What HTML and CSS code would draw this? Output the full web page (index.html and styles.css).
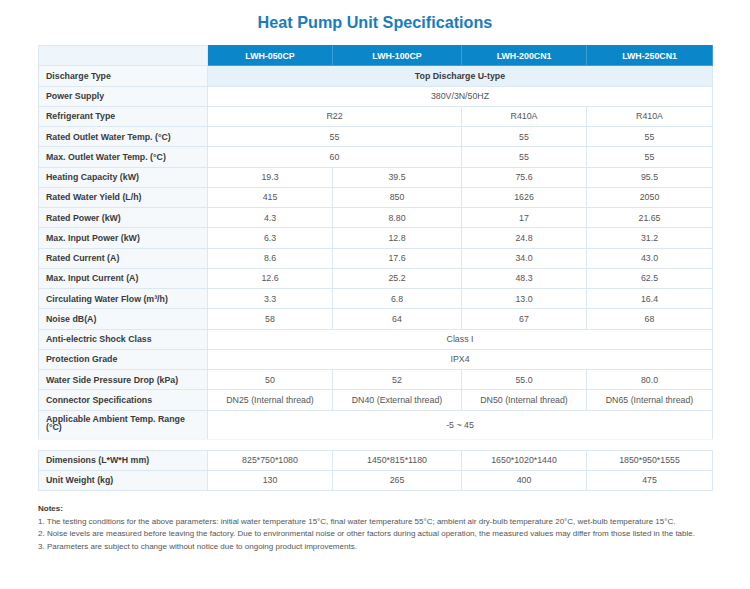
FILE: index.html
```html
<!DOCTYPE html>
<html>
<head>
<meta charset="utf-8">
<link rel="stylesheet" href="styles.css">
</head>
<body>
<div class="page">
  <h1 class="title">Heat Pump Unit Specifications</h1>
  <table class="spec">
    <colgroup>
      <col class="c-label"><col class="c1"><col class="c2"><col class="c3"><col class="c4">
    </colgroup>
    <thead>
      <tr class="head">
        <th class="corner"></th>
        <th>LWH-050CP</th>
        <th>LWH-100CP</th>
        <th>LWH-200CN1</th>
        <th>LWH-250CN1</th>
      </tr>
    </thead>
    <tbody>
      <tr><th>Discharge Type</th><td colspan="4" class="strong tint">Top Discharge U-type</td></tr>
      <tr><th>Power Supply</th><td colspan="4">380V/3N/50HZ</td></tr>
      <tr><th>Refrigerant Type</th><td colspan="2">R22</td><td>R410A</td><td>R410A</td></tr>
      <tr><th>Rated Outlet Water Temp. (°C)</th><td colspan="2">55</td><td>55</td><td>55</td></tr>
      <tr><th>Max. Outlet Water Temp. (°C)</th><td colspan="2">60</td><td>55</td><td>55</td></tr>
      <tr><th>Heating Capacity (kW)</th><td>19.3</td><td>39.5</td><td>75.6</td><td>95.5</td></tr>
      <tr><th>Rated Water Yield (L/h)</th><td>415</td><td>850</td><td>1626</td><td>2050</td></tr>
      <tr><th>Rated Power (kW)</th><td>4.3</td><td>8.80</td><td>17</td><td>21.65</td></tr>
      <tr><th>Max. Input Power (kW)</th><td>6.3</td><td>12.8</td><td>24.8</td><td>31.2</td></tr>
      <tr><th>Rated Current (A)</th><td>8.6</td><td>17.6</td><td>34.0</td><td>43.0</td></tr>
      <tr><th>Max. Input Current (A)</th><td>12.6</td><td>25.2</td><td>48.3</td><td>62.5</td></tr>
      <tr><th>Circulating Water Flow (m³/h)</th><td>3.3</td><td>6.8</td><td>13.0</td><td>16.4</td></tr>
      <tr><th>Noise dB(A)</th><td>58</td><td>64</td><td>67</td><td>68</td></tr>
      <tr><th>Anti-electric Shock Class</th><td colspan="4">Class I</td></tr>
      <tr><th>Protection Grade</th><td colspan="4">IPX4</td></tr>
      <tr><th>Water Side Pressure Drop (kPa)</th><td>50</td><td>52</td><td>55.0</td><td>80.0</td></tr>
      <tr><th>Connector Specifications</th><td>DN25 (Internal thread)</td><td>DN40 (External thread)</td><td>DN50 (Internal thread)</td><td>DN65 (Internal thread)</td></tr>
      <tr class="tall"><th class="wrap">Applicable Ambient Temp. Range<br>(°C)</th><td colspan="4">-5 ~ 45</td></tr>
    </tbody>
  </table>

  <table class="spec second">
    <colgroup>
      <col class="c-label"><col class="c1"><col class="c2"><col class="c3"><col class="c4">
    </colgroup>
    <tbody>
      <tr><th>Dimensions (L*W*H mm)</th><td>825*750*1080</td><td>1450*815*1180</td><td>1650*1020*1440</td><td>1850*950*1555</td></tr>
      <tr><th>Unit Weight (kg)</th><td>130</td><td>265</td><td>400</td><td>475</td></tr>
    </tbody>
  </table>

  <div class="notes">
    <p class="notes-title">Notes:</p>
    <p>1. The testing conditions for the above parameters: initial water temperature 15°C, final water temperature 55°C; ambient air dry-bulb temperature 20°C, wet-bulb temperature 15°C.</p>
    <p>2. Noise levels are measured before leaving the factory. Due to environmental noise or other factors during actual operation, the measured values may differ from those listed in the table.</p>
    <p>3. Parameters are subject to change without notice due to ongoing product improvements.</p>
  </div>
</div>
</body>
</html>
```

FILE: styles.css
```css
html, body {
  margin: 0;
  padding: 0;
  background: #ffffff;
}

body {
  font-family: "Liberation Sans", Arial, Helvetica, sans-serif;
  color: #555;
}

.page {
  width: 750px;
  padding-top: 12px;
}

.title {
  margin: 0 0 13px 0;
  text-align: center;
  font-size: 16.2px;
  line-height: 20px;
  font-weight: bold;
  color: #1a7cbd;
}

.spec {
  margin-left: 38px;
  width: 674px;
  table-layout: fixed;
  border-collapse: collapse;
  font-size: 8.8px;
}

.c-label { width: 169px; }
.c1 { width: 125px; }
.c2 { width: 129px; }
.c3 { width: 125px; }
.c4 { width: 126px; }

.spec tr {
  height: 20.25px;
}

.spec th,
.spec td {
  border: 1px solid #dbe7f1;
  padding: 0;
  line-height: 10px;
}

.spec tbody th {
  text-align: left;
  padding-left: 7px;
  font-weight: bold;
  color: #3a3a3a;
  background: #f5f9fc;
}

.spec td {
  text-align: center;
  color: #555;
  background: #ffffff;
}

.spec td.strong {
  font-weight: bold;
  color: #3a3a3a;
}

.spec td.tint {
  background: #e7f1fa;
}

.head th {
  background: #0b86c9;
  color: #ffffff;
  font-weight: bold;
  text-align: center;
  border-color: #3c9fd6;
  border-top-color: #0b86c9;
}

.head th.corner {
  background: #eef5fb;
  border-color: #dbe7f1;
}

.spec tr.tall {
  height: 29px;
}

.spec tr.tall th,
.spec tr.tall td {
  border-bottom-color: #f3f7fb;
}

.spec th.wrap {
  line-height: 8.5px;
  vertical-align: middle;
  padding-bottom: 3px;
}

.second {
  margin-top: 10px;
}

.notes {
  margin: 12px 0 0 38px;
  font-size: 8px;
  line-height: 12.5px;
  color: #555;
}

.notes p {
  margin: 0;
}

.notes .notes-title {
  font-weight: bold;
  color: #3a3a3a;
}
```
